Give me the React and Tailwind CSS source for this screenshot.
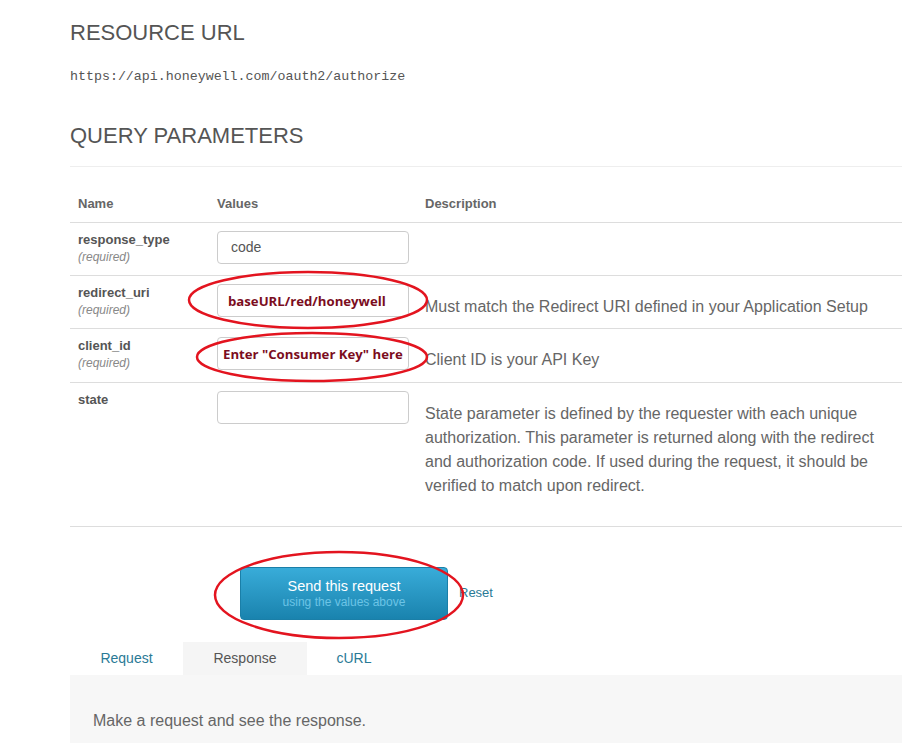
import React from 'react';

const rows = [
    { name: 'response_type', required: true, value: 'code', kind: 'plain', desc: '', h: 'h-[53px]', pad: 'pl-[13px]' },
    { name: 'redirect_uri', required: true, value: 'baseURL/red/honeywell', kind: 'mark', desc: 'Must match the Redirect URI defined in your Application Setup', h: 'h-[53px]', pad: 'pl-[10px]' },
    { name: 'client_id', required: true, value: 'Enter "Consumer Key" here', kind: 'mark', desc: 'Client ID is your API Key', h: 'h-[54px]', pad: 'pl-[5px]' },
    {
        name: 'state',
        required: false,
        value: '',
        kind: 'plain',
        desc: 'State parameter is defined by the requester with each unique authorization. This parameter is returned along with the redirect and authorization code. If used during the request, it should be verified to match upon redirect.',
        h: 'h-[144px]',
        pad: 'pl-[13px]',
    },
];

function ParamRow({ row }) {
    return (
        <div className={`flex border-t border-[#dddddd] ${row.h}`}>
            {/* Name */}
            <div className="w-[147px] pl-2 pt-[9px]">
                <div className="text-[13px] font-bold leading-4 text-[#555]">{row.name}</div>
                {row.required && <div className="text-[12px] italic leading-4 mt-[1px] text-[#888]">(required)</div>}
            </div>

            {/* Value */}
            <div className="w-[208px] pt-[8px]">
                <div className="w-[192px] h-[33px] border border-[#cccccc] rounded-[4px] bg-white flex items-center overflow-hidden whitespace-nowrap">
                    {row.kind === 'mark' ? (
                        <span className={`${row.pad} pt-[3px] text-[13.2px] font-bold text-[#7b0d1e]`} style={{ fontFamily: '"Open Sans", "Noto Sans", sans-serif' }}>
                            {row.value}
                        </span>
                    ) : (
                        <span className={`${row.pad} text-[14px] text-[#555]`}>{row.value}</span>
                    )}
                </div>
            </div>

            {/* Description */}
            <div className="flex-1 pt-[19px] pr-6 text-[16px] leading-6 text-[#666]">{row.desc}</div>
        </div>
    );
}

export default function App() {
    return (
        <div className="relative w-[924px] h-[743px] overflow-hidden bg-white" style={{ fontFamily: '"Liberation Sans", Arial, sans-serif' }}>
            <div className="ml-[70px] w-[832px] pt-[21px]">

                {/* Resource URL */}
                <h2 className="text-[22px] leading-6 text-[#555] font-normal">RESOURCE URL</h2>
                <div className="mt-[22px] text-[13.3px] leading-5 text-[#555]" style={{ fontFamily: '"Liberation Mono", "Courier New", monospace' }}>
                    https://api.honeywell.com/oauth2/authorize
                </div>

                {/* Query Parameters */}
                <h2 className="mt-[37px] text-[22px] leading-6 text-[#555] font-normal pb-[18px] border-b border-[#eeeeee]">QUERY PARAMETERS</h2>

                <div className="mt-[19px]">
                    <div className="flex h-[36px] items-center text-[13px] font-bold text-[#666]">
                        <div className="w-[147px] pl-2">Name</div>
                        <div className="w-[208px]">Values</div>
                        <div className="flex-1">Description</div>
                    </div>
                    {rows.map((r) => (
                        <ParamRow key={r.name} row={r} />
                    ))}
                    <div className="border-t border-[#dddddd]" />
                </div>

                {/* Actions */}
                <div className="flex items-center mt-[40px] ml-[170px]">
                    <button className="w-[208px] h-[53px] rounded-[4px] bg-gradient-to-b from-[#38acd9] to-[#1983ae] flex flex-col items-center justify-center border border-[#1a7fa8]">
                        <span className="text-[14.5px] leading-[18px] text-white">Send this request</span>
                        <span className="text-[12px] leading-[15px] text-[#6cc4e6]">using the values above</span>
                    </button>
                    <a className="ml-[11px] text-[13px] text-[#2a7a96] mt-[-2px]">Reset</a>
                </div>

                {/* Tabs */}
                <div className="flex mt-[22px] h-[33px] text-[14px]">
                    <div className="w-[113px] flex items-center justify-center text-[#2a7a96]">Request</div>
                    <div className="w-[124px] flex items-center justify-center bg-[#f5f5f5] text-[#555]">Response</div>
                    <div className="w-[94px] flex items-center justify-center text-[#2a7a96]">cURL</div>
                </div>
                <div className="bg-[#f7f7f7] h-[120px] pl-[23px] pt-[34px] text-[16px] leading-6 text-[#666]">
                    Make a request and see the response.
                </div>
            </div>

            {/* Red annotation ellipses */}
            <svg className="absolute inset-0 pointer-events-none" width="924" height="743">
                <ellipse cx="308" cy="300" rx="119" ry="28" fill="none" stroke="#e3141f" strokeWidth="2.5" />
                <ellipse cx="312" cy="357" rx="115" ry="24" fill="none" stroke="#e3141f" strokeWidth="2.5" />
                <ellipse cx="339" cy="595" rx="124" ry="43" fill="none" stroke="#e3141f" strokeWidth="2.5" />
            </svg>
        </div>
    );
}
